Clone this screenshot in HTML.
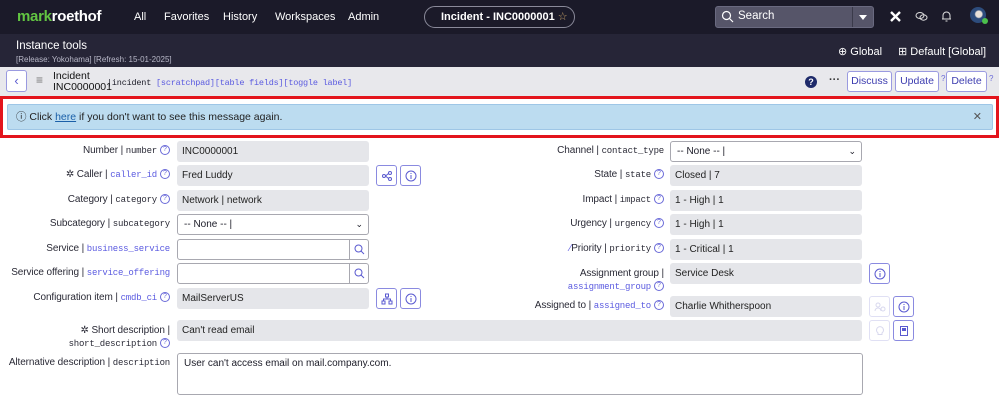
<!DOCTYPE html>
<html><head><meta charset="utf-8"><style>
*{box-sizing:border-box;margin:0;padding:0}
body{width:999px;height:412px;overflow:hidden;background:#fff;font-family:"Liberation Sans",sans-serif;font-size:11px;color:#1c1c28;position:relative}
.a{position:absolute}
.nav{left:0;top:0;width:999px;height:34px;background:#1b1a29}
.nav .m{color:#fff;font-size:11px;top:11px}
.tools{left:0;top:34px;width:999px;height:33px;background:#262537}
.hdr{left:0;top:67px;width:999px;height:30px;background:#e8e8ec}
.mono{font-family:"Liberation Mono",monospace;font-size:9px;letter-spacing:-0.2px}
.lnk{color:#5a5ae0}
.btn{border:1px solid #9a9ae0;border-radius:3px;background:#fff;color:#3d3db0;font-size:10.5px;text-align:center;line-height:19px;height:21px}
.lbl{text-align:right;font-size:10px;color:#2a2a36;white-space:nowrap;letter-spacing:-0.1px}
.inp{background:#e5e6ea;border-radius:3px;height:21px;padding-left:5px;line-height:21px;font-size:10px;color:#222}
.box{border:1px solid #a8a8b0;border-radius:3px;background:#fff;height:21px;font-size:10px;line-height:19px;padding-left:6px}
.q{display:inline-block;width:10px;height:10px;border:1px solid #6a6ad8;border-radius:50%;font-size:7px;line-height:8px;text-align:center;color:#6a6ad8;margin-left:3px;vertical-align:middle;font-family:"Liberation Sans";letter-spacing:0}
.ib{width:21px;height:21px;border:1px solid #8a8ae0;border-radius:3px;background:#fff}
.ib.d{border-color:#e0e0f4}
.ib svg{position:absolute;left:4px;top:4px}
</style></head><body>
<div class="a nav">
 <div class="a" style="left:17px;top:8px;font-size:15px;font-weight:bold;color:#fff;letter-spacing:-0.3px"><span style="color:#62c542">mark</span>roethof</div>
 <div class="a m" style="left:134px">All</div>
 <div class="a m" style="left:164px">Favorites</div>
 <div class="a m" style="left:223px">History</div>
 <div class="a m" style="left:275px">Workspaces</div>
 <div class="a m" style="left:348px">Admin</div>
 <div class="a" style="left:424px;top:6px;width:151px;height:22px;border:1px solid #8a8a9a;border-radius:11px;color:#fff;font-size:11px;font-weight:bold;line-height:20px;padding-left:16px;white-space:nowrap">Incident - INC0000001 <span style="color:#c9a46a;font-weight:normal">☆</span></div>
 <div class="a" style="left:715px;top:6px;width:159px;height:22px;background:#565569;border-radius:3px;border:1px solid #6a6a80"></div>
 <div class="a" style="left:852px;top:7px;width:1px;height:20px;background:#3a3a4a"></div>
 <svg class="a" style="left:721px;top:10px" width="13" height="13" viewBox="0 0 13 13"><circle cx="5.5" cy="5.5" r="4" fill="none" stroke="#fff" stroke-width="1.2"/><path d="M8.5 8.5L12 12" stroke="#fff" stroke-width="1.2"/></svg>
 <div class="a" style="left:738px;top:10px;color:#fff;font-size:11.5px">Search</div>
 <div class="a" style="left:859px;top:15px;width:0;height:0;border-left:4px solid transparent;border-right:4px solid transparent;border-top:5px solid #fff"></div>
 <svg class="a" style="left:889px;top:10px" width="13" height="13" viewBox="0 0 13 13"><path d="M2 2L11 11M11 2L2 11" stroke="#fff" stroke-width="2.4"/></svg>
 <svg class="a" style="left:915px;top:11px" width="13" height="11" viewBox="0 0 13 11"><ellipse cx="5" cy="4.5" rx="4" ry="3" fill="none" stroke="#ddd" stroke-width="1"/><ellipse cx="8.5" cy="6.5" rx="3.5" ry="2.7" fill="none" stroke="#ddd" stroke-width="1"/></svg>
 <svg class="a" style="left:941px;top:10px" width="11" height="12" viewBox="0 0 11 12"><path d="M2 9V5.5a3.5 3.5 0 0 1 7 0V9H2zM1 9h9M4.5 11h2" fill="none" stroke="#ddd" stroke-width="1"/></svg>
 <div class="a" style="left:970px;top:7px;width:16px;height:16px;border-radius:50%;background:radial-gradient(circle at 55% 45%,#e8e0d8 0 25%,#2d4c7c 35%)"></div>
 <div class="a" style="left:982px;top:18px;width:6px;height:6px;border-radius:50%;background:#4cc04c"></div>
</div>
<div class="a tools">
 <div class="a" style="left:16px;top:6px;color:#fff;font-size:11.5px">Instance tools</div>
 <div class="a" style="left:16px;top:21px;color:#b8b8c8;font-size:8px">[Release: Yokohama] [Refresh: 15-01-2025]</div>
 <div class="a" style="left:838px;top:11px;color:#fff;font-size:11px">⊕ Global</div>
 <div class="a" style="left:898px;top:11px;color:#fff;font-size:11px">⊞ Default [Global]</div>
</div>
<div class="a hdr">
 <div class="a btn" style="left:6px;top:3px;width:21px;height:22px;color:#5a5ad0;font-size:13px;line-height:19px">‹</div>
 <div class="a" style="left:36px;top:6px;color:#777;font-size:12px">≡</div>
 <div class="a" style="left:53px;top:4px;font-size:10.5px;line-height:11px;color:#111">Incident<br>INC0000001</div>
 <div class="a" style="left:107px;top:9px"><span class="mono" style="font-size:8.5px">|incident </span><span class="mono lnk" style="font-size:8.5px">[scratchpad][table fields][toggle label]</span></div>
 <div class="a" style="left:805px;top:9px;width:12px;height:12px;border-radius:50%;background:#1e2a6a;color:#fff;font-size:9px;font-weight:bold;text-align:center;line-height:12px">?</div>
 <div class="a" style="left:829px;top:9px;font-size:11px;font-weight:bold;color:#333;line-height:8px">···</div>
 <div class="a btn" style="left:847px;top:4px;width:45px">Discuss</div>
 <div class="a btn" style="left:895px;top:4px;width:44px">Update</div>
 <div class="a" style="left:941px;top:7px;font-size:8px;color:#6a6ad8">?</div>
 <div class="a btn" style="left:946px;top:4px;width:41px">Delete</div>
 <div class="a" style="left:989px;top:7px;font-size:8px;color:#6a6ad8">?</div>
</div>
<div class="a" style="left:0;top:96px;width:999px;height:42px;border:3px solid #e3141c"></div>
<div class="a" style="left:7px;top:104px;width:986px;height:26px;background:#bcdcf0;border:1px solid #9ec6e6;border-radius:2px;font-size:10.5px;line-height:24px;padding-left:8px;color:#222">ⓘ Click <span style="color:#1a5fa8;text-decoration:underline">here</span> if you don't want to see this message again.<span class="a" style="right:10px;top:0;color:#555;font-size:11px">✕</span></div>

<!-- left column -->
<div class="a lbl" style="right:829px;top:145px">Number | <span class="mono">number</span><span class="q">?</span></div>
<div class="a inp" style="left:177px;top:141px;width:192px">INC0000001</div>
<div class="a lbl" style="right:829px;top:169px">✲ Caller | <span class="mono lnk">caller_id</span><span class="q">?</span></div>
<div class="a inp" style="left:177px;top:165px;width:192px">Fred Luddy</div>
<div class="a ib" style="left:376px;top:165px"><svg width="12" height="12" viewBox="0 0 12 12"><circle cx="3" cy="6" r="1.5" fill="none" stroke="#5a5ad0"/><circle cx="9" cy="3" r="1.5" fill="none" stroke="#5a5ad0"/><circle cx="9" cy="9" r="1.5" fill="none" stroke="#5a5ad0"/><path d="M4.5 6L7.5 3.5M4.5 6L7.5 8.5" stroke="#5a5ad0"/></svg></div>
<div class="a ib" style="left:400px;top:165px"><svg width="12" height="12" viewBox="0 0 12 12"><circle cx="6" cy="6" r="5" fill="none" stroke="#5a5ad0"/><path d="M6 5v4M6 3v1" stroke="#5a5ad0"/></svg></div>
<div class="a lbl" style="right:829px;top:194px">Category | <span class="mono">category</span><span class="q">?</span></div>
<div class="a inp" style="left:177px;top:190px;width:192px">Network | network</div>
<div class="a lbl" style="right:829px;top:218px">Subcategory | <span class="mono">subcategory</span></div>
<div class="a box" style="left:177px;top:214px;width:192px">-- None -- |<span class="a" style="right:5px;top:0;font-size:9px">⌄</span></div>
<div class="a lbl" style="right:829px;top:243px">Service | <span class="mono lnk">business_service</span></div>
<div class="a box" style="left:177px;top:239px;width:192px"><span class="a" style="left:171px;top:-1px;width:1px;height:21px;background:#a8a8b0"></span><svg class="a" style="left:176px;top:4px" width="11" height="11" viewBox="0 0 11 11"><circle cx="4.5" cy="4.5" r="3.5" fill="none" stroke="#5a5ad0"/><path d="M7 7l3 3" stroke="#5a5ad0"/></svg></div>
<div class="a lbl" style="right:829px;top:267px">Service offering | <span class="mono lnk">service_offering</span></div>
<div class="a box" style="left:177px;top:263px;width:192px"><span class="a" style="left:171px;top:-1px;width:1px;height:21px;background:#a8a8b0"></span><svg class="a" style="left:176px;top:4px" width="11" height="11" viewBox="0 0 11 11"><circle cx="4.5" cy="4.5" r="3.5" fill="none" stroke="#5a5ad0"/><path d="M7 7l3 3" stroke="#5a5ad0"/></svg></div>
<div class="a lbl" style="right:829px;top:292px">Configuration item | <span class="mono lnk">cmdb_ci</span><span class="q">?</span></div>
<div class="a inp" style="left:177px;top:288px;width:192px">MailServerUS</div>
<div class="a ib" style="left:376px;top:288px"><svg width="12" height="12" viewBox="0 0 12 12"><rect x="4.5" y="1" width="3" height="3" fill="none" stroke="#5a5ad0"/><rect x="1" y="8" width="3" height="3" fill="none" stroke="#5a5ad0"/><rect x="8" y="8" width="3" height="3" fill="none" stroke="#5a5ad0"/><path d="M6 4v2M2.5 8V6h7v2" fill="none" stroke="#5a5ad0"/></svg></div>
<div class="a ib" style="left:400px;top:288px"><svg width="12" height="12" viewBox="0 0 12 12"><circle cx="6" cy="6" r="5" fill="none" stroke="#5a5ad0"/><path d="M6 5v4M6 3v1" stroke="#5a5ad0"/></svg></div>
<div class="a lbl" style="right:829px;top:324px;line-height:13px">✲ Short description |<br><span class="mono">short_description</span><span class="q">?</span></div>
<div class="a inp" style="left:177px;top:320px;width:685px">Can't read email</div>
<div class="a ib d" style="left:869px;top:320px"><svg width="12" height="12" viewBox="0 0 12 12"><path d="M4 8a3.5 3.5 0 1 1 4 0v1.5H4z" fill="none" stroke="#d8d8ee"/></svg></div>
<div class="a ib" style="left:893px;top:320px"><svg width="12" height="12" viewBox="0 0 12 12"><rect x="2.5" y="1.5" width="7" height="9" fill="none" stroke="#5a5ad0"/><rect x="4" y="3" width="4" height="3" fill="#5a5ad0"/></svg></div>
<div class="a lbl" style="right:829px;top:357px">Alternative description | <span class="mono">description</span></div>
<div class="a box" style="left:177px;top:353px;width:686px;height:42px;line-height:20px">User can't access email on mail.company.com.</div>

<!-- right column -->
<div class="a lbl" style="right:335px;top:145px">Channel | <span class="mono">contact_type</span></div>
<div class="a box" style="left:670px;top:141px;width:192px">-- None -- |<span class="a" style="right:5px;top:0;font-size:9px">⌄</span></div>
<div class="a lbl" style="right:335px;top:169px">State | <span class="mono">state</span><span class="q">?</span></div>
<div class="a inp" style="left:670px;top:165px;width:192px">Closed | 7</div>
<div class="a lbl" style="right:335px;top:194px">Impact | <span class="mono">impact</span><span class="q">?</span></div>
<div class="a inp" style="left:670px;top:190px;width:192px">1 - High | 1</div>
<div class="a lbl" style="right:335px;top:218px">Urgency | <span class="mono">urgency</span><span class="q">?</span></div>
<div class="a inp" style="left:670px;top:214px;width:192px">1 - High | 1</div>
<div class="a lbl" style="right:335px;top:243px"><span class="lnk">⁄</span>Priority | <span class="mono">priority</span><span class="q">?</span></div>
<div class="a inp" style="left:670px;top:239px;width:192px">1 - Critical | 1</div>
<div class="a lbl" style="right:335px;top:267px;line-height:13px">Assignment group |<br><span class="mono lnk">assignment_group</span><span class="q">?</span></div>
<div class="a inp" style="left:670px;top:263px;width:192px">Service Desk</div>
<div class="a ib" style="left:869px;top:263px"><svg width="12" height="12" viewBox="0 0 12 12"><circle cx="6" cy="6" r="5" fill="none" stroke="#5a5ad0"/><path d="M6 5v4M6 3v1" stroke="#5a5ad0"/></svg></div>
<div class="a lbl" style="right:335px;top:300px">Assigned to | <span class="mono lnk">assigned_to</span><span class="q">?</span></div>
<div class="a inp" style="left:670px;top:296px;width:192px">Charlie Whitherspoon</div>
<div class="a ib d" style="left:869px;top:296px"><svg width="12" height="12" viewBox="0 0 12 12"><circle cx="4" cy="4" r="2" fill="none" stroke="#d8d8ee"/><path d="M1 10a3 3 0 0 1 6 0" fill="none" stroke="#d8d8ee"/><circle cx="9" cy="8" r="2" fill="none" stroke="#d8d8ee"/></svg></div>
<div class="a ib" style="left:893px;top:296px"><svg width="12" height="12" viewBox="0 0 12 12"><circle cx="6" cy="6" r="5" fill="none" stroke="#5a5ad0"/><path d="M6 5v4M6 3v1" stroke="#5a5ad0"/></svg></div>
</body></html>
